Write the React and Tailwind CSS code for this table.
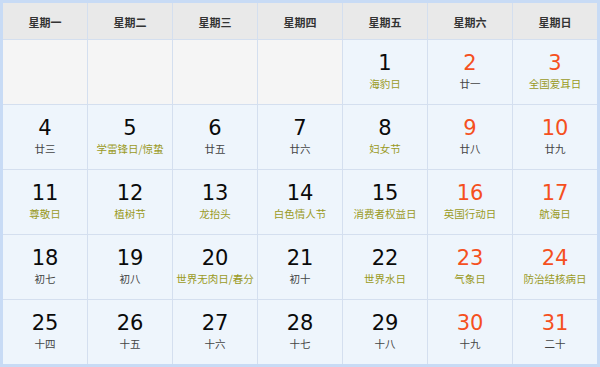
import React from "react";

const days = ["星期一", "星期二", "星期三", "星期四", "星期五", "星期六", "星期日"];

const cells = [
  null, null, null, null,
  { n: 1, t: "海豹日", f: true },
  { n: 2, t: "廿一", r: true },
  { n: 3, t: "全国爱耳日", f: true, r: true },
  { n: 4, t: "廿三" },
  { n: 5, t: "学雷锋日/惊蛰", f: true },
  { n: 6, t: "廿五" },
  { n: 7, t: "廿六" },
  { n: 8, t: "妇女节", f: true },
  { n: 9, t: "廿八", r: true },
  { n: 10, t: "廿九", r: true },
  { n: 11, t: "尊敬日", f: true },
  { n: 12, t: "植树节", f: true },
  { n: 13, t: "龙抬头", f: true },
  { n: 14, t: "白色情人节", f: true },
  { n: 15, t: "消费者权益日", f: true },
  { n: 16, t: "英国行动日", f: true, r: true },
  { n: 17, t: "航海日", f: true, r: true },
  { n: 18, t: "初七" },
  { n: 19, t: "初八" },
  { n: 20, t: "世界无肉日/春分", f: true },
  { n: 21, t: "初十" },
  { n: 22, t: "世界水日", f: true },
  { n: 23, t: "气象日", f: true, r: true },
  { n: 24, t: "防治结核病日", f: true, r: true },
  { n: 25, t: "十四" },
  { n: 26, t: "十五" },
  { n: 27, t: "十六" },
  { n: 28, t: "十七" },
  { n: 29, t: "十八" },
  { n: 30, t: "十九", r: true },
  { n: 31, t: "二十", r: true },
];

export default function App() {
  return (
    <div className="w-[600px] h-[367px] bg-[#c8dbf5] p-[3px] box-border font-['Noto_Sans_CJK_SC',sans-serif]">
      <div className="grid grid-cols-[repeat(7,84px)] grid-rows-[36px_repeat(5,64px)] bg-[#d4dfef] gap-px w-[594px] h-[361px]">
        {days.map((d) => (
          <div
            key={d}
            className="bg-[#e9e9e9] flex items-center justify-center text-[11px] font-bold text-[#333] leading-none pt-[2px]"
          >
            {d}
          </div>
        ))}
        {cells.map((c, i) =>
          c ? (
            <div key={i} className="bg-[#eef5fc] flex flex-col items-center pt-[12px]">
              <div
                className={`font-['DejaVu_Sans',sans-serif] text-[21px] leading-[23px] ${
                  c.r ? "text-[#f5501e]" : "text-[#0a0a0a]"
                }`}
              >
                {c.n}
              </div>
              <div
                className={`text-[10.5px] leading-[14px] mt-[2px] whitespace-nowrap ${
                  c.f ? "text-[#9a9a1e]" : "text-[#444]"
                }`}
              >
                {c.t}
              </div>
            </div>
          ) : (
            <div key={i} className="bg-[#f5f5f5]" />
          )
        )}
      </div>
    </div>
  );
}
